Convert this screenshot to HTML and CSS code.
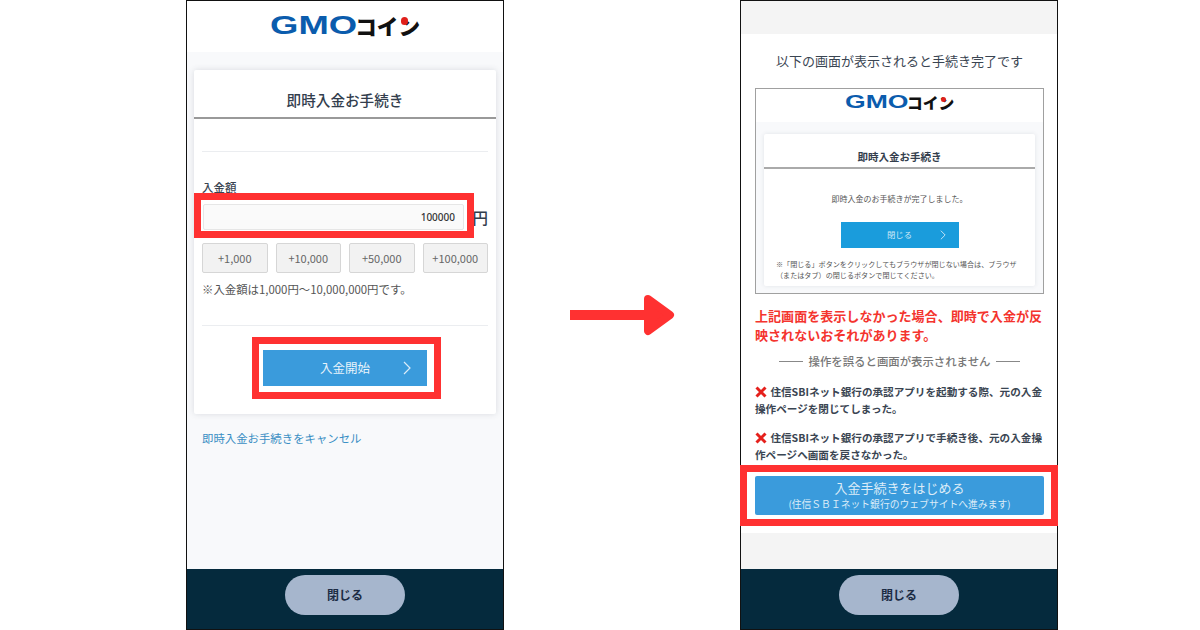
FILE: index.html
```html
<!DOCTYPE html>
<html lang="ja">
<head>
    <meta charset="UTF-8">
    <title>即時入金お手続き</title>
    <link rel="stylesheet" href="styles.css">
</head>
<body>
    <div class="stage">
        <!-- left phone: amount entry -->
        <div class="phone">
            <div class="screen">
                <div class="site-head">
                    <div class="logo"><span class="logo-gmo"><span>GMO</span></span><span class="logo-coin">コイン</span><i class="logo-dot"></i></div>
                </div>
                <div class="deposit-body">
                    <div class="card">
                        <div class="card-title">即時入金お手続き</div>
                        <div class="card-inner">
                            <div class="rule first-rule"></div>
                            <div class="field-label">入金額</div>
                            <div class="amount-row">
                                <div class="amount-input">100000</div>
                                <div class="yen">円</div>
                            </div>
                            <div class="quick-row">
                                <div class="quick-btn">+1,000</div>
                                <div class="quick-btn">+10,000</div>
                                <div class="quick-btn">+50,000</div>
                                <div class="quick-btn">+100,000</div>
                            </div>
                            <div class="note">※入金額は1,000円〜10,000,000円です。</div>
                            <div class="rule second-rule"></div>
                            <div class="start-btn">入金開始
                                <svg class="chevron" viewBox="0 0 8 14"><path d="M1 1 L7 7 L1 13"/></svg>
                            </div>
                        </div>
                    </div>
                    <div class="cancel-link">即時入金お手続きをキャンセル</div>
                </div>
            </div>
            <div class="app-foot"><div class="close-pill">閉じる</div></div>
            <div class="mark mark-input"></div>
            <div class="mark mark-start"></div>
        </div>

        <div class="arrow-gap">
            <svg class="big-arrow" viewBox="0 0 106 42">
                <rect x="0" y="16" width="80" height="10"/>
                <polygon points="78,5 100,21 78,37"/>
            </svg>
        </div>

        <!-- right phone: completion guide -->
        <div class="phone">
            <div class="screen guide">
                <div class="guide-top"></div>
                <div class="guide-body">
                    <div class="guide-title">以下の画面が表示されると手続き完了です</div>
                    <div class="preview">
                        <div class="preview-head">
                            <div class="logo logo-small"><span class="logo-gmo"><span>GMO</span></span><span class="logo-coin">コイン</span><i class="logo-dot"></i></div>
                        </div>
                        <div class="preview-body">
                            <div class="preview-card">
                                <div class="preview-title">即時入金お手続き</div>
                                <div class="preview-msg">即時入金のお手続きが完了しました。</div>
                                <div class="preview-btn">閉じる
                                    <svg class="chevron small" viewBox="0 0 8 14"><path d="M1 1 L7 7 L1 13"/></svg>
                                </div>
                                <div class="preview-note">※「閉じる」ボタンをクリックしてもブラウザが閉じない場合は、ブラウザ<br>（またはタブ）の閉じるボタンで閉じてください。</div>
                            </div>
                        </div>
                    </div>
                    <div class="warning">上記画面を表示しなかった場合、即時で入金が反映されないおそれがあります。</div>
                    <div class="divider-text">操作を誤ると画面が表示されません</div>
                    <div class="mistake">
                        <svg class="cross" viewBox="0 0 12 12"><path d="M1.5 1.5 L10.5 10.5 M10.5 1.5 L1.5 10.5"/></svg>
                        住信SBIネット銀行の承認アプリを起動する際、元の入金操作ページを閉じてしまった。
                    </div>
                    <div class="mistake">
                        <svg class="cross" viewBox="0 0 12 12"><path d="M1.5 1.5 L10.5 10.5 M10.5 1.5 L1.5 10.5"/></svg>
                        住信SBIネット銀行の承認アプリで手続き後、元の入金操作ページへ画面を戻さなかった。
                    </div>
                    <div class="begin-btn">
                        <div class="begin-main">入金手続きをはじめる</div>
                        <div class="begin-sub">(住信ＳＢＩネット銀行のウェブサイトへ進みます)</div>
                    </div>
                </div>
                <div class="guide-bottom"></div>
            </div>
            <div class="app-foot"><div class="close-pill">閉じる</div></div>
            <div class="mark mark-begin"></div>
        </div>
    </div>
</body>
</html>
```

FILE: styles.css
```css
* {
    box-sizing: border-box;
}
body {
    margin: 0;
    background: #fff;
    font-family: "Noto Sans CJK JP", "Noto Sans", sans-serif;
    color: #3a4552;
}
.stage {
    display: flex;
    align-items: center;
    width: 1200px;
    height: 630px;
    padding-left: 186px;
    overflow: hidden;
}
.phone {
    position: relative;
    display: flex;
    flex-direction: column;
    width: 318px;
    height: 630px;
    border: 1px solid #111;
    background: #fff;
}
.screen {
    flex: 1;
    display: flex;
    flex-direction: column;
}
.app-foot {
    display: flex;
    justify-content: center;
    height: 60px;
    padding-top: 6px;
    background: #052a3d;
}
.close-pill {
    width: 120px;
    height: 40px;
    border-radius: 20px;
    background: #a6b6cd;
    color: #1c2c44;
    font-size: 12px;
    font-weight: 700;
    line-height: 40px;
    text-align: center;
}

/* logo */
.logo {
    position: relative;
    display: flex;
    align-items: center;
    font-size: 24px;
    width: 6.25em;
    height: 1em;
    line-height: 1em;
}
.logo-gmo {
    display: block;
    width: 3.7em;
    color: #0b5cad;
    font-family: "Liberation Sans", sans-serif;
    font-weight: 700;
}
.logo-gmo span {
    display: inline-block;
    transform: scale(1.52, 1.04);
    transform-origin: left center;
}
.logo-coin {
    color: #111;
    font-size: 0.9em;
    font-weight: 900;
    white-space: nowrap;
}
.logo-dot {
    position: absolute;
    left: 5.47em;
    top: 0.16em;
    width: 0.3em;
    height: 0.3em;
    border-radius: 50%;
    background: #e0201c;
}
.logo-small {
    font-size: 17.5px;
}

/* left phone */
.site-head {
    display: flex;
    justify-content: center;
    align-items: center;
    height: 51px;
    padding-bottom: 2px;
    background: #fff;
}
.deposit-body {
    flex: 1;
    padding: 18px 7px 0;
    background: #f8f9fb;
}
.card {
    height: 344px;
    background: #fff;
    border-radius: 2px;
    box-shadow: 0 0 6px rgba(60, 70, 90, 0.16);
}
.card-title {
    height: 49px;
    padding-top: 17px;
    border-bottom: 2px solid #999;
    color: #333e4d;
    font-size: 14.6px;
    font-weight: 500;
    line-height: 26px;
    text-align: center;
}
.card-inner {
    padding: 0 8px;
}
.rule {
    height: 1px;
    background: #ebedf0;
}
.first-rule {
    margin-top: 32px;
}
.field-label {
    margin-top: 26px;
    font-size: 11.5px;
    font-weight: 500;
    line-height: 18px;
}
.amount-row {
    display: flex;
    align-items: center;
    justify-content: space-between;
    height: 26px;
    margin-top: 8px;
}
.amount-input {
    width: 261px;
    height: 26px;
    margin-left: 1px;
    padding-right: 8px;
    border: 1px solid #e6e6e6;
    border-radius: 2px;
    background: #fafafa;
    color: #333;
    font-family: "Noto Sans", sans-serif;
    font-size: 10px;
    font-weight: 500;
    line-height: 24px;
    text-align: right;
}
.yen {
    color: #333e4d;
    font-size: 15.5px;
    font-weight: 500;
    line-height: 22px;
}
.quick-row {
    display: flex;
    justify-content: space-between;
    margin-top: 13px;
}
.quick-btn {
    width: 65.5px;
    height: 30px;
    border: 1px solid #d6d6d6;
    border-radius: 2px;
    background: #f2f2f2;
    color: #666;
    font-size: 11px;
    line-height: 28px;
    text-align: center;
}
.note {
    margin-top: 7px;
    color: #555;
    font-size: 11.4px;
    line-height: 18px;
    white-space: nowrap;
}
.second-rule {
    margin-top: 27px;
}
.start-btn {
    position: relative;
    width: 164px;
    height: 36px;
    margin: 24px auto 0;
    background: #3a9bdc;
    color: #e8f3fb;
    font-size: 12.5px;
    line-height: 35px;
    text-align: center;
}
.chevron {
    position: absolute;
    right: 16px;
    top: 11px;
    width: 8px;
    height: 14px;
    fill: none;
    stroke: #dcecf8;
    stroke-width: 1.2;
}
.cancel-link {
    margin-top: 15px;
    padding-left: 8px;
    color: #3a8fc4;
    font-size: 11.4px;
    line-height: 18px;
}

/* right phone */
.guide-top {
    height: 33px;
    background: #f4f4f4;
}
.guide-bottom {
    flex: 1;
    background: #f4f4f4;
}
.guide-body {
    height: 499px;
    padding: 0 13px 0 14px;
    background: #fff;
    overflow: hidden;
}
.guide-title {
    margin-top: 16px;
    font-size: 13px;
    line-height: 22px;
    text-align: center;
    white-space: nowrap;
}
.preview {
    width: 289px;
    height: 206px;
    margin-top: 16px;
    border: 1px solid #a0a0a0;
    background: #f8f9fb;
}
.preview-head {
    display: flex;
    justify-content: center;
    align-items: center;
    height: 33px;
    padding-bottom: 5px;
    background: #fff;
}
.preview-body {
    padding: 12px 8px 0;
}
.preview-card {
    height: 152px;
    background: #fff;
    border-radius: 2px;
    box-shadow: 0 0 4px rgba(60, 70, 90, 0.12);
}
.preview-title {
    height: 35px;
    padding-top: 13px;
    border-bottom: 2px solid #aaa;
    color: #333e4d;
    font-size: 10.5px;
    font-weight: 700;
    line-height: 20px;
    text-align: center;
}
.preview-msg {
    margin-top: 24px;
    color: #555;
    font-size: 8px;
    line-height: 12px;
    text-align: center;
}
.preview-btn {
    position: relative;
    width: 118px;
    height: 26px;
    margin: 17px auto 0;
    background: #1a9cdc;
    color: #cfe8f6;
    font-size: 8.4px;
    line-height: 25px;
    text-align: center;
}
.chevron.small {
    right: 13px;
    top: 8px;
    width: 6px;
    height: 10px;
}
.preview-note {
    margin-top: 11px;
    padding-left: 12px;
    color: #555;
    font-size: 7.1px;
    line-height: 11px;
    white-space: nowrap;
}
.warning {
    margin-top: 12px;
    color: #f4342e;
    font-size: 13.05px;
    font-weight: 700;
    line-height: 19px;
}
.divider-text {
    display: flex;
    align-items: center;
    justify-content: center;
    gap: 6px;
    margin-top: 7px;
    color: #777;
    font-size: 11.4px;
    font-weight: 500;
    line-height: 20px;
    white-space: nowrap;
}
.divider-text::before, .divider-text::after {
    content: "";
    width: 24px;
    height: 1px;
    background: #888;
}
.mistake {
    margin-top: 12px;
    color: #3a4552;
    font-size: 10.6px;
    font-weight: 700;
    line-height: 17px;
}
.cross {
    width: 12px;
    height: 12px;
    margin-right: 1px;
    vertical-align: -2px;
    fill: none;
    stroke: #e5201c;
    stroke-width: 3;
}
.begin-btn {
    width: 289px;
    height: 39px;
    margin-top: 13px;
    border-radius: 2px;
    background: #3a9bdc;
    color: #dcecf8;
    text-align: center;
    white-space: nowrap;
}
.begin-main {
    padding-top: 2px;
    font-size: 13px;
    line-height: 19px;
}
.begin-sub {
    font-size: 9.8px;
    line-height: 14px;
}

/* red highlight frames drawn over the screens */
.mark {
    position: absolute;
    border: 7px solid #ff3131;
}
.mark-input {
    left: 7px;
    top: 192px;
    width: 280px;
    height: 45px;
}
.mark-start {
    left: 65px;
    top: 336px;
    width: 189px;
    height: 62px;
}
.mark-begin {
    left: -1px;
    top: 464px;
    width: 318px;
    height: 61px;
}

/* arrow between phones */
.arrow-gap {
    display: flex;
    justify-content: center;
    width: 236px;
}
.big-arrow {
    width: 106px;
    height: 42px;
    margin-left: 2px;
    fill: #ff3131;
    stroke: none;
}
.big-arrow polygon {
    stroke: #ff3131;
    stroke-width: 8;
    stroke-linejoin: round;
}
```
